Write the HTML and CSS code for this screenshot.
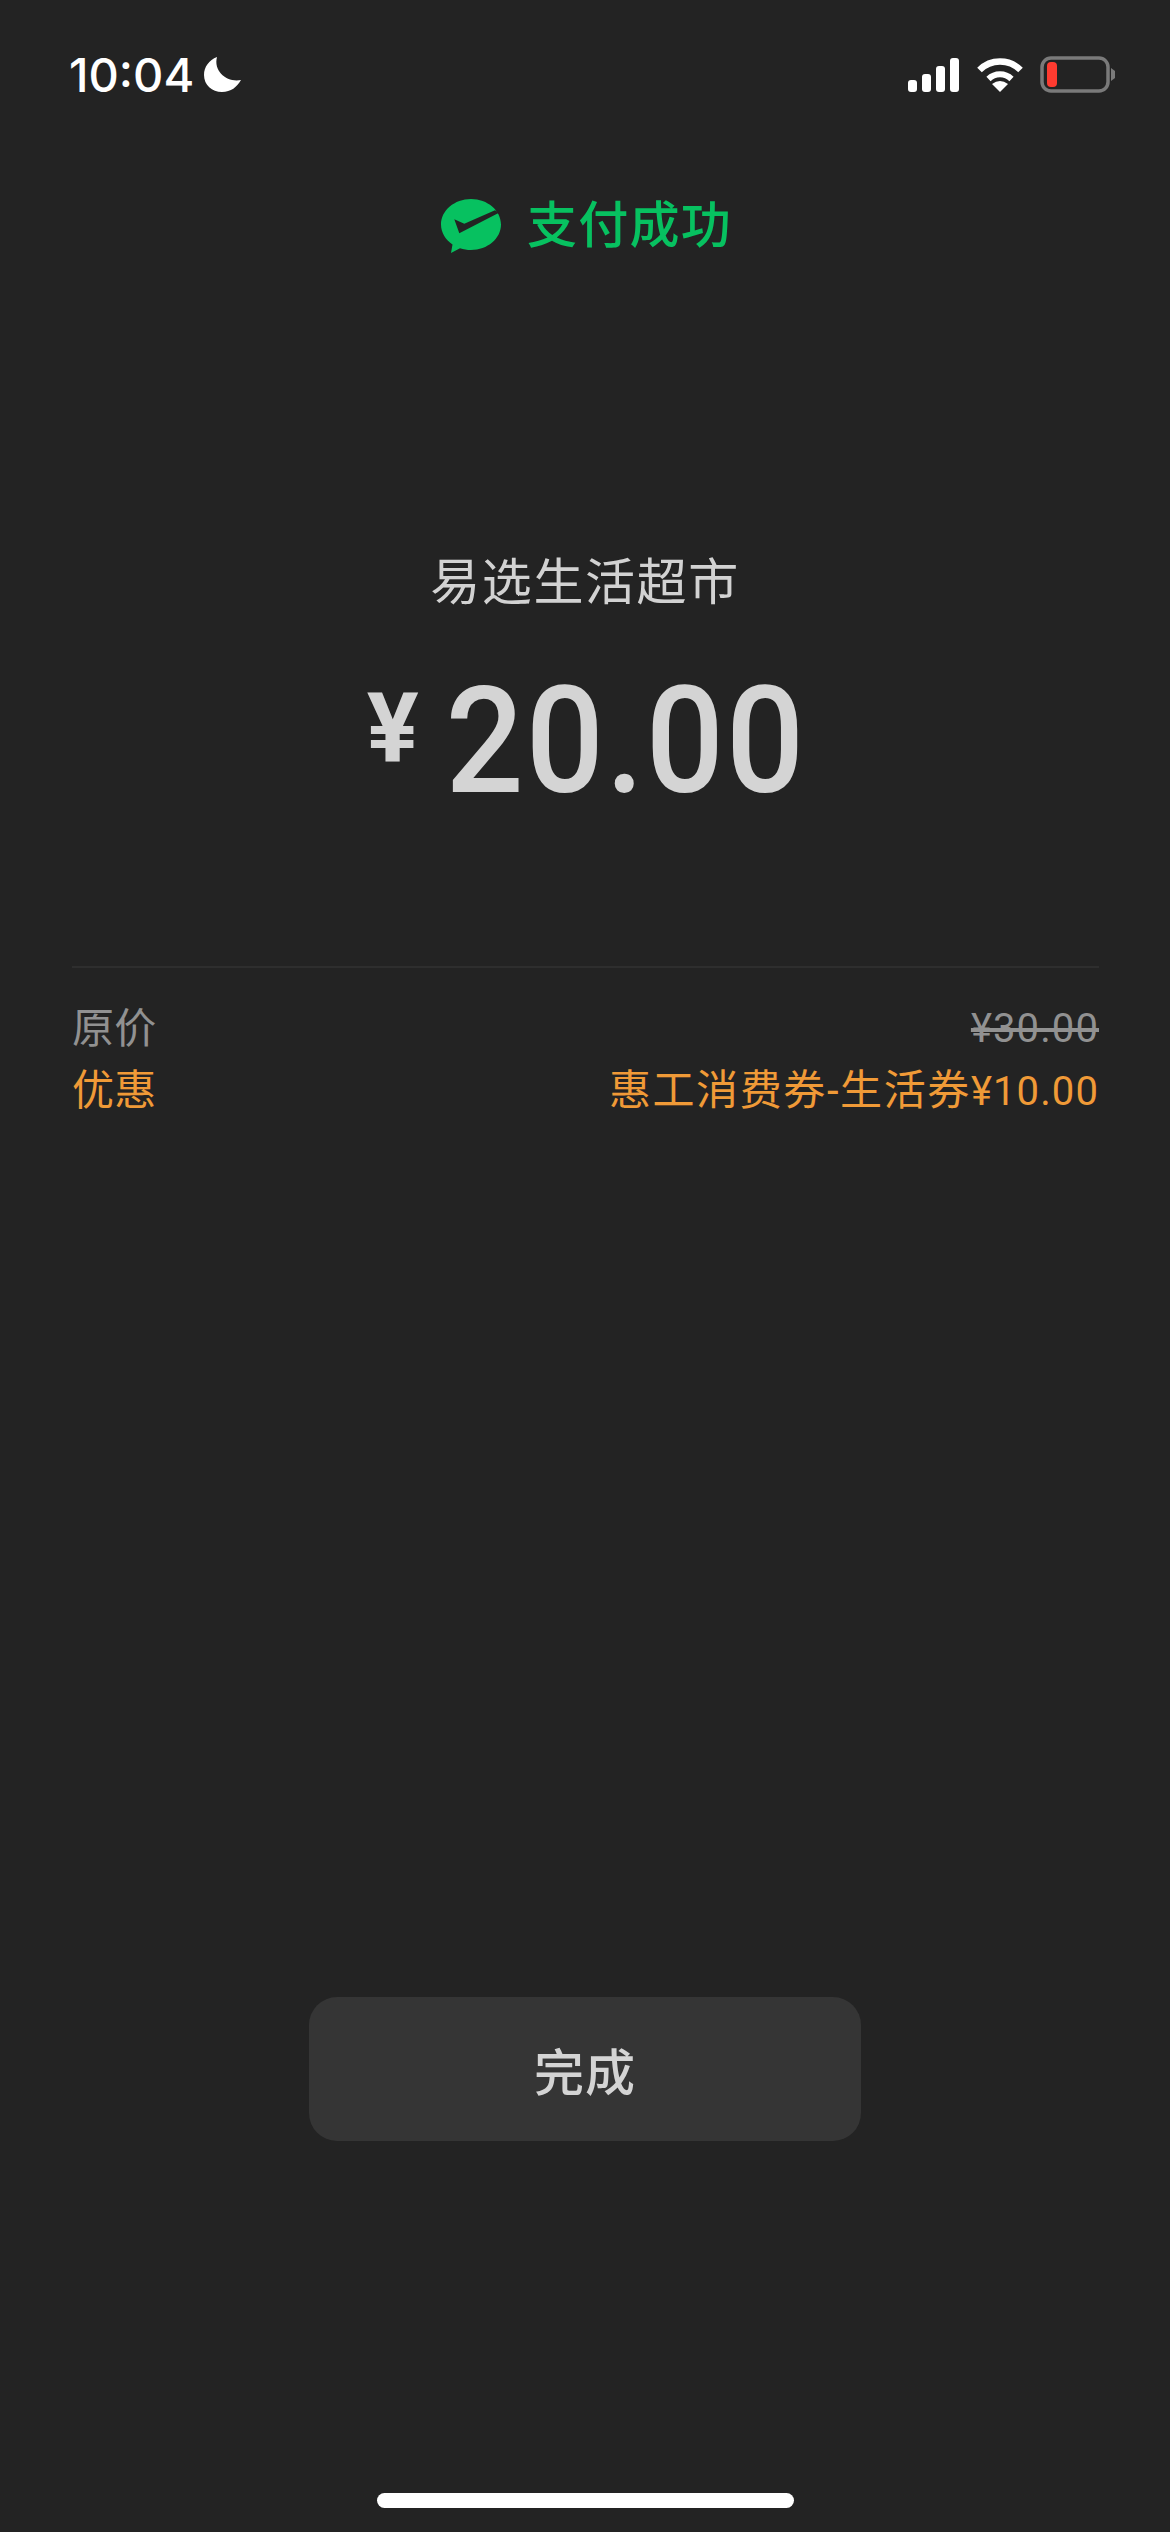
FILE: index.html
```html
<!DOCTYPE html>
<html lang="zh-CN">
<head>
    <meta charset="UTF-8">
    <meta name="viewport" content="width=device-width, initial-scale=1.0">
    <link rel="stylesheet" href="styles.css">
    <title>支付成功</title>
</head>
<body>
    <div class="page">
        <div class="status-bar">
            <div class="status-left">
                <span class="time">10:04</span>
                <svg class="moon" viewBox="0 0 37 35"><path d="M13 0C5 3 0 10 0 18C0 28 8 35 18 35C27 35 33 30 37 23C24 26 9 15 13 0Z" fill="#fff"/></svg>
            </div>
            <div class="status-right">
                <svg class="signal" viewBox="0 0 51 34" fill="#fff">
                    <rect x="0" y="22" width="9" height="12" rx="3"/>
                    <rect x="14" y="16" width="9" height="18" rx="3"/>
                    <rect x="28" y="8" width="9" height="26" rx="3"/>
                    <rect x="42" y="0" width="9" height="34" rx="3"/>
                </svg>
                <svg class="wifi" viewBox="0 0 48 35">
                    <path d="M3.5 13A29 29 0 0 1 44.500 13" fill="none" stroke="#fff" stroke-width="6.500"/>
                    <path d="M12.500 22A16.500 16.500 0 0 1 35.500 22" fill="none" stroke="#fff" stroke-width="6"/>
                    <path d="M24 35L16 27Q24 21 32 27Z" fill="#fff"/>
                </svg>
                <svg class="battery" viewBox="0 0 76 37">
                    <rect x="2" y="2" width="66" height="33" rx="9" fill="none" stroke="#7a7a7a" stroke-width="3.500"/>
                    <rect x="7" y="6" width="10" height="25" rx="4" fill="#ff3b30"/>
                    <path d="M71 12L75 15V22L71 25Z" fill="#7a7a7a"/>
                </svg>
            </div>
        </div>

        <div class="result">
            <svg class="wechat-pay" viewBox="0 0 60 54">
                <path d="M30 0C46.500 0 60 11.500 60 25.500C60 39.500 46.500 51 30 51C26 51 22.500 50.300 19 49.200L10 54L11.500 45.500C4.500 40.800 0 33.500 0 25.500C0 11.500 13.500 0 30 0Z" fill="#07c160"/>
                <path d="M13.300 20.300L23.300 24.700L54 11.300L58 13.700L18.300 34.300Z" fill="#232323"/>
            </svg>
            <span class="result-text">支付成功</span>
        </div>

        <div class="merchant">易选生活超市</div>
        <div class="amount">
            <span class="currency">¥</span>
            <span class="value">20.00</span>
        </div>

        <div class="details">
            <div class="detail-row muted">
                <span class="detail-label">原价</span>
                <span class="price strike">¥30.00</span>
            </div>
            <div class="detail-row accent">
                <span class="detail-label">优惠</span>
                <span>惠工消费券-生活券<span class="price">¥10.00</span></span>
            </div>
        </div>

        <button class="done" type="button">完成</button>
        <div class="home-bar"></div>
    </div>
</body>
</html>
```

FILE: styles.css
```css
body {
    margin: 0;
    background-color: #232323;
    font-family: Roboto, "Noto Sans CJK SC", sans-serif;
}

.page {
    height: 2532px;
    display: flex;
    flex-direction: column;
    align-items: center;
    overflow: hidden;
}

.status-bar {
    align-self: stretch;
    height: 37px;
    margin-top: 56px;
    padding: 0 54px 0 69px;
    display: flex;
    justify-content: space-between;
    align-items: center;
}

.status-left,
.status-right {
    display: flex;
    align-items: center;
}

.time {
    font-family: Inter, sans-serif;
    font-size: 47px;
    font-weight: 500;
    color: #fff;
}

.moon {
    width: 37px;
    height: 35px;
    margin-left: 10px;
}

.signal {
    width: 51px;
    height: 34px;
}

.wifi {
    width: 48px;
    height: 35px;
    margin-left: 17px;
}

.battery {
    width: 76px;
    height: 37px;
    margin-left: 16px;
}

.result {
    margin: 106px 0 0 3px;
    display: flex;
    align-items: center;
}

.wechat-pay {
    width: 60px;
    height: 54px;
    margin-right: 26px;
}

.result-text {
    font-size: 50px;
    font-weight: 500;
    letter-spacing: 1.2px;
    line-height: 54px;
    color: #07c160;
}

.merchant {
    margin-top: 300px;
    font-size: 50px;
    letter-spacing: 1.6px;
    line-height: 60px;
    color: #d2d2d2;
}

.amount {
    margin: 44px 0 0 16px;
    display: flex;
    align-items: flex-start;
    color: #d4d4d4;
    font-weight: 500;
}

.currency {
    font-size: 97px;
    font-weight: 700;
    line-height: 120px;
    margin: 11px 13px 0 0;
}

.value {
    font-size: 148px;
    letter-spacing: 2px;
    line-height: 170px;
    transform: scaleX(0.93);
}

.details {
    align-self: stretch;
    margin: 139px 71px 0 72px;
    padding-top: 30px;
    border-top: 2px solid #2e2e2e;
}

.detail-row {
    display: flex;
    justify-content: space-between;
    font-size: 42px;
    letter-spacing: 1.6px;
    line-height: 62px;
}

.detail-label {
    letter-spacing: 0.2px;
}

.price {
    font-size: 40px;
    letter-spacing: 1.1px;
}

.muted {
    color: #919191;
}

.accent {
    color: #f09a37;
}

.strike {
    text-decoration: line-through;
}

.done {
    width: 552px;
    height: 144px;
    margin-top: auto;
    border: none;
    border-radius: 28px;
    background-color: #353535;
    color: #d4d4d4;
    font-family: inherit;
    font-size: 50px;
    font-weight: 500;
    letter-spacing: 1px;
}

.home-bar {
    width: 417px;
    height: 15px;
    margin: 352px 0 24px;
    border-radius: 8px;
    background-color: #fff;
}
```
